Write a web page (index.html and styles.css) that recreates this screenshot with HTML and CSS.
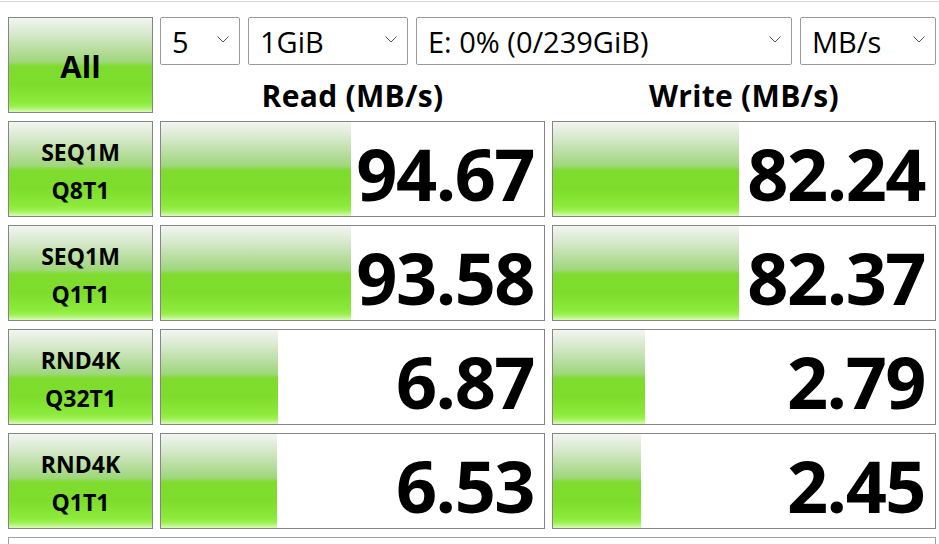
FILE: index.html
```html
<!DOCTYPE html>
<html>
<head>
<meta charset="utf-8">
<link rel="stylesheet" href="styles.css">
</head>
<body>
<div class="topline"></div>
<div class="grid">
  <div class="tile all">All</div>
  <div class="topright">
    <div class="selects">
      <div class="sel w80">5<span class="chev"><svg width="12" height="7" viewBox="0 0 12 7"><path d="M0.5 0.5 L6 6 L11.5 0.5" fill="none" stroke="#555" stroke-width="1"/></svg></span></div>
      <div class="sel w160">1GiB<span class="chev"><svg width="12" height="7" viewBox="0 0 12 7"><path d="M0.5 0.5 L6 6 L11.5 0.5" fill="none" stroke="#555" stroke-width="1"/></svg></span></div>
      <div class="sel w376">E: 0% (0/239GiB)<span class="chev"><svg width="12" height="7" viewBox="0 0 12 7"><path d="M0.5 0.5 L6 6 L11.5 0.5" fill="none" stroke="#555" stroke-width="1"/></svg></span></div>
      <div class="sel w136">MB/s<span class="chev"><svg width="12" height="7" viewBox="0 0 12 7"><path d="M0.5 0.5 L6 6 L11.5 0.5" fill="none" stroke="#555" stroke-width="1"/></svg></span></div>
    </div>
    <div class="heads">
      <div class="head">Read (MB/s)</div>
      <div class="head">Write (MB/s)</div>
    </div>
  </div>

  <div class="tile label"><span>SEQ1M</span><span>Q8T1</span></div>
  <div class="res"><div class="bar" style="width:190px"></div><div class="val">94.67</div></div>
  <div class="res"><div class="bar" style="width:186px"></div><div class="val">82.24</div></div>

  <div class="tile label"><span>SEQ1M</span><span>Q1T1</span></div>
  <div class="res"><div class="bar" style="width:190px"></div><div class="val">93.58</div></div>
  <div class="res"><div class="bar" style="width:186px"></div><div class="val">82.37</div></div>

  <div class="tile label"><span>RND4K</span><span>Q32T1</span></div>
  <div class="res"><div class="bar" style="width:117px"></div><div class="val">6.87</div></div>
  <div class="res"><div class="bar" style="width:92px"></div><div class="val">2.79</div></div>

  <div class="tile label"><span>RND4K</span><span>Q1T1</span></div>
  <div class="res"><div class="bar" style="width:116px"></div><div class="val">6.53</div></div>
  <div class="res"><div class="bar" style="width:88px"></div><div class="val">2.45</div></div>

  <div class="comment"></div>
</div>
</body>
</html>
```
FILE: styles.css
```css
html, body {
  margin: 0;
  padding: 0;
  background: #ffffff;
  width: 939px;
  height: 544px;
  overflow: hidden;
  font-family: "Open Sans", "Noto Sans", sans-serif;
  color: #000;
}
.topline {
  height: 1px;
  margin-top: 1px;
  background: #d9d9d9;
}
.grid {
  display: grid;
  grid-template-columns: 145px 385px 384px;
  grid-template-rows: repeat(5, 96px) 7px;
  column-gap: 7px;
  row-gap: 8px;
  padding: 15px 0 0 8px;
}
.tile {
  box-sizing: border-box;
  border: 1px solid #858585;
  background: linear-gradient(to bottom, #f3f5f1 0%, #d5e8c9 18%, #b0db93 38%, #9ed77a 47%, #7fdc2f 51%, #7ddd2c 70%, #8ae939 88%, #9bf04e 94%, #d6fbb8 100%);
  display: flex;
  align-items: center;
  justify-content: center;
  font-weight: 700;
}
.all {
  font-size: 31px;
  padding-top: 2px;
}
.label {
  flex-direction: column;
  font-size: 23px;
  line-height: 38px;
  padding-top: 3px;
}
.topright {
  grid-column: 2 / span 2;
  display: flex;
  flex-direction: column;
}
.selects {
  display: flex;
  gap: 8px;
  height: 48px;
}
.sel {
  box-sizing: border-box;
  height: 48px;
  border: 1px solid #9a9a9a;
  border-radius: 2px;
  display: flex;
  align-items: center;
  padding: 0 0 0 11px;
  font-size: 29px;
  position: relative;
}
.w80 { width: 80px; }
.w160 { width: 160px; }
.w376 { width: 376px; }
.w136 { width: 136px; }
.chev {
  position: absolute;
  right: 10px;
  top: 18px;
  display: flex;
}
.heads {
  display: flex;
  gap: 7px;
  flex: 1;
}
.head {
  font-weight: 700;
  font-size: 30px;
  text-align: center;
  line-height: 44px;
  padding-top: 9px;
  letter-spacing: 0.3px;
}
.head:first-child { width: 385px; }
.head:last-child { width: 384px; }
.res {
  box-sizing: border-box;
  border: 1px solid #858585;
  position: relative;
  display: flex;
  align-items: center;
  justify-content: flex-end;
}
.bar {
  position: absolute;
  left: 0;
  top: 0;
  bottom: 0;
  background: linear-gradient(to bottom, #f3f5f1 0%, #d5e8c9 18%, #b0db93 38%, #9ed77a 47%, #7fdc2f 51%, #7ddd2c 70%, #8ae939 88%, #9bf04e 94%, #d6fbb8 100%);
}
.val {
  position: relative;
  font-weight: 700;
  font-size: 72px;
  letter-spacing: -1.5px;
  padding: 8px 10px 0 0;
  line-height: 1;
}
.comment {
  grid-column: 1 / span 3;
  box-sizing: border-box;
  border: 1px solid #a0a0a0;
  border-bottom: 0;
}
```
